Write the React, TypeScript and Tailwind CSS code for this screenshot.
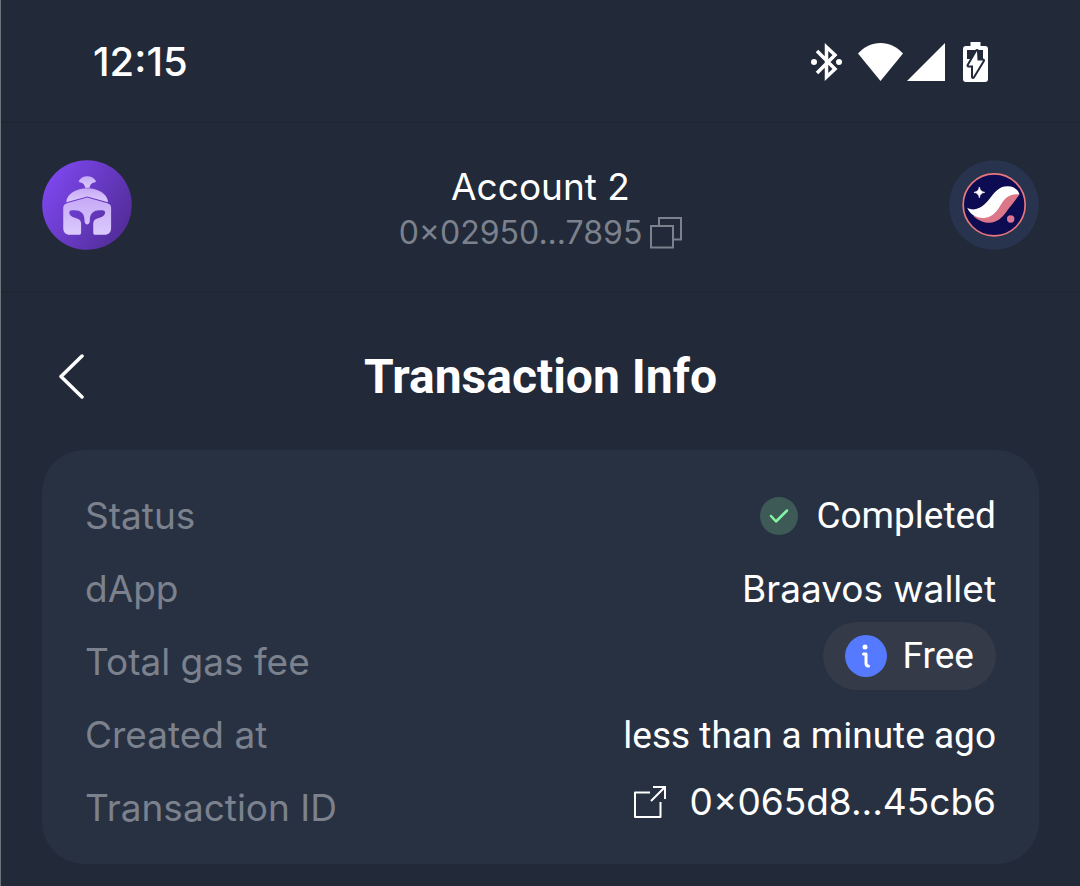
import type { ReactNode } from "react";

const ADDRESS = "0×02950...7895";
const TX_ID = "0×065d8...45cb6";

const StatusIcons = () => (
  <div className="flex items-center text-white">
    <svg className="h-[40px] w-[32px]" viewBox="0 0 32 40" fill="none" stroke="currentColor" strokeWidth="3.500">
      <path d="m6 9 18 18-8.500 8V5l8.500 8L6 31" strokeLinejoin="miter" />
      <circle cx="3" cy="20" r="3" fill="currentColor" stroke="none" />
      <circle cx="28" cy="20" r="3" fill="currentColor" stroke="none" />
    </svg>
    <svg className="ml-[15px] h-[38px] w-[45px]" viewBox="0 0 45 38" fill="currentColor">
      <path d="M0 10.500C6 4 14 0 22.500 0S39 4 45 10.500L22.500 38Z" />
    </svg>
    <svg className="ml-1 h-[38px] w-[38px]" viewBox="0 0 38 38" fill="currentColor">
      <path d="M38 0V38H0Z" />
    </svg>
    <svg className="ml-[18px] h-[40px] w-[25px]" viewBox="0 0 25 40" fill="currentColor">
      <path d="M7.500 0h10v4H22a3 3 0 0 1 3 3v30a3 3 0 0 1-3 3H3a3 3 0 0 1-3-3V7a3 3 0 0 1 3-3h4.500Z" />
      <path d="M4 8h16v9H4Z" fill="#222938" />
      <path
        d="M14 9 5.500 23.500H10V35l10-16.500h-5.500Z"
        stroke="#222938"
        strokeWidth="4"
        strokeLinejoin="round"
        paintOrder="stroke"
      />
    </svg>
  </div>
);

const HelmetAvatar = () => (
  <svg className="h-[90px] w-[90px]" viewBox="36 30 267 267" aria-hidden="true">
    <defs>
      <linearGradient id="avatar-bg" x1="0" y1="0.200" x2="1" y2="0.800">
        <stop offset="0" stopColor="#7f48f2" />
        <stop offset="1" stopColor="#502b94" />
      </linearGradient>
      <linearGradient id="helmet" x1="0" y1="0" x2="0" y2="1">
        <stop offset="0" stopColor="#c6a9f6" />
        <stop offset="1" stopColor="#dccafd" />
      </linearGradient>
    </defs>
    <circle cx="169.500" cy="163.500" r="133" fill="url(#avatar-bg)" />
    <g fill="url(#helmet)">
      <path d="M146 91C151 82 160 78 170 78s20 4 25 13c2 3 0 5-4 6-8 1-13 7-14 15h-13c-1-8-6-14-14-15-4-1-6-3-4-6Z" />
      <path d="M108 155c2-25 30-41 62-41s60 16 62 41l-62-17Z" />
      <path d="M99 172c0-8 5-12 11-14l60-17 60 17c7 2 11 6 11 14v60c0 13-7 20-20 20h-27c-4 0-6-3-6-7v-27c0-7 4-11 10-14 12-5 23-6 25-17 1-5-3-8-8-8h-8c-18 0-29 10-29 28 0 8-2 14-8 14s-8-6-8-14c0-18-11-28-29-28h-8c-5 0-9 3-8 8 2 11 13 12 25 17 6 3 10 7 10 14v27c0 4-2 7-6 7h-27c-13 0-20-7-20-20Z" />
    </g>
  </svg>
);

const StarknetLogo = () => (
  <svg className="h-[90px] w-[90px]" viewBox="26 36 267 267" aria-hidden="true">
    <circle cx="159.500" cy="169.500" r="133" fill="#28334e" />
    <circle cx="160" cy="169" r="92" fill="#0d0b51" stroke="#e8787c" strokeWidth="5" />
    <path d="M98 202c16 15 33 20 48 20 22 0 38-16 50-32 16-22 24-30 39-52-40-10-55 15-67 40Z" fill="#dc7689" />
    <path d="M80 178c20 11 42 2 61-20 21-26 31-44 59-44 18 0 31 10 35 24-30-4-45 12-57 34-15 25-30 36-50 36-24 0-40-11-48-30Z" fill="#fff" />
    <circle cx="209" cy="211" r="11" fill="#df7595" />
    <path d="M116 116q2 14 16 16-14 2-16 16-2-14-16-16 14-2 16-16Z" fill="#fff" stroke="#fff" strokeWidth="2" />
  </svg>
);

const CopyIcon = () => (
  <svg className="h-[32px] w-[32px]" viewBox="0 0 32 32" fill="none" stroke="currentColor" strokeWidth="2">
    <path d="M1 9h22v21.500H1Z" />
    <path d="M9 9V1h22v21.500h-8" />
  </svg>
);

const ExternalIcon = () => (
  <svg className="h-[32px] w-[32px]" viewBox="0 0 32 32" fill="none" stroke="currentColor" strokeWidth="2">
    <path d="M16 6.500H1V31h25.500V16" strokeLinejoin="round" />
    <path d="M19 1h12v12M31 1 17 15" />
  </svg>
);

const CheckBadge = () => (
  <svg className="h-[38px] w-[38px] shrink-0" viewBox="0 0 38 38" fill="none" aria-hidden="true">
    <circle cx="19" cy="19" r="19" fill="#3d5a56" />
    <path d="m11 19 5 5.500L27 13.500" stroke="#84f5a2" strokeWidth="2.500" strokeLinecap="round" strokeLinejoin="round" />
  </svg>
);

const InfoBadge = () => (
  <svg className="h-[42px] w-[42px] shrink-0" viewBox="0 0 42 42" fill="none" aria-hidden="true">
    <circle cx="21" cy="21" r="21" fill="#557aff" />
    <circle cx="20" cy="12" r="2.500" fill="#fff" />
    <path d="M18.500 19h2.500v9q0 3 2.500 3" stroke="#fff" strokeWidth="3" strokeLinecap="round" strokeLinejoin="round" />
  </svg>
);

const Row = ({ label, children }: { label: string; children: ReactNode }) => (
  <div className="flex h-[45px] items-center justify-between">
    <dt className="text-[#7b818d]">{label}</dt>
    <dd className="text-white">{children}</dd>
  </div>
);

const App = () => {
  return (
    <div className="min-h-screen border-l border-[#6d747c] bg-[#222938] font-['Inter',sans-serif] text-white">
      <div className="flex h-[121px] items-center justify-between pt-[3px] pr-[92px] pl-[92px]">
        <time className="text-[40px] font-medium">12:15</time>
        <StatusIcons />
      </div>

      <header className="flex items-start justify-between border-y-2 border-[#1f2634] px-[41px] pt-[37px] pb-[35px]">
        <button type="button" aria-label="Account">
          <HelmetAvatar />
        </button>
        <div className="flex flex-col items-center pt-1 leading-[46px]">
          <p className="text-[37px]">Account 2</p>
          <div className="flex items-center gap-2 text-[32px] text-[#7b818d]">
            <span>{ADDRESS}</span>
            <button type="button" aria-label="Copy address">
              <CopyIcon />
            </button>
          </div>
        </div>
        <button type="button" aria-label="Network">
          <StarknetLogo />
        </button>
      </header>

      <main className="px-[41px] pb-[22px]">
        <div className="grid grid-cols-[60px_1fr_60px] items-center pt-[52px] pb-[41px]">
          <button type="button" aria-label="Back" className="pl-4">
            <svg className="h-[46px] w-[28px]" viewBox="0 0 28 46" fill="none" stroke="currentColor" strokeWidth="3.500">
              <path d="M24 2 3 22.500 24 43" strokeLinecap="round" strokeLinejoin="round" />
            </svg>
          </button>
          <h1 className="text-center font-['Roboto',sans-serif] text-[48px] leading-[64px] font-bold">Transaction Info</h1>
        </div>

        <dl className="flex flex-col gap-7 rounded-[42px] bg-[#283142] px-[43px] pt-[43px] pb-[34px] text-[37px] leading-[45px]">
          <Row label="Status">
            <span className="flex items-center gap-[18px] font-['Roboto',sans-serif]">
              <CheckBadge />
              Completed
            </span>
          </Row>
          <Row label="dApp">Braavos wallet</Row>
          <Row label="Total gas fee">
            <div className="pb-3">
              <button
                type="button"
                className="flex h-[68px] items-center gap-4 rounded-full bg-[#343a47] px-[22px] font-['Roboto',sans-serif]"
              >
                <InfoBadge />
                Free
              </button>
            </div>
          </Row>
          <Row label="Created at">
            <span className="font-['Roboto',sans-serif]">less than a minute ago</span>
          </Row>
          <Row label="Transaction ID">
            <a href="#transaction" className="flex items-center gap-6 pb-3">
              <ExternalIcon />
              {TX_ID}
            </a>
          </Row>
        </dl>
      </main>
    </div>
  );
};

export default App;
